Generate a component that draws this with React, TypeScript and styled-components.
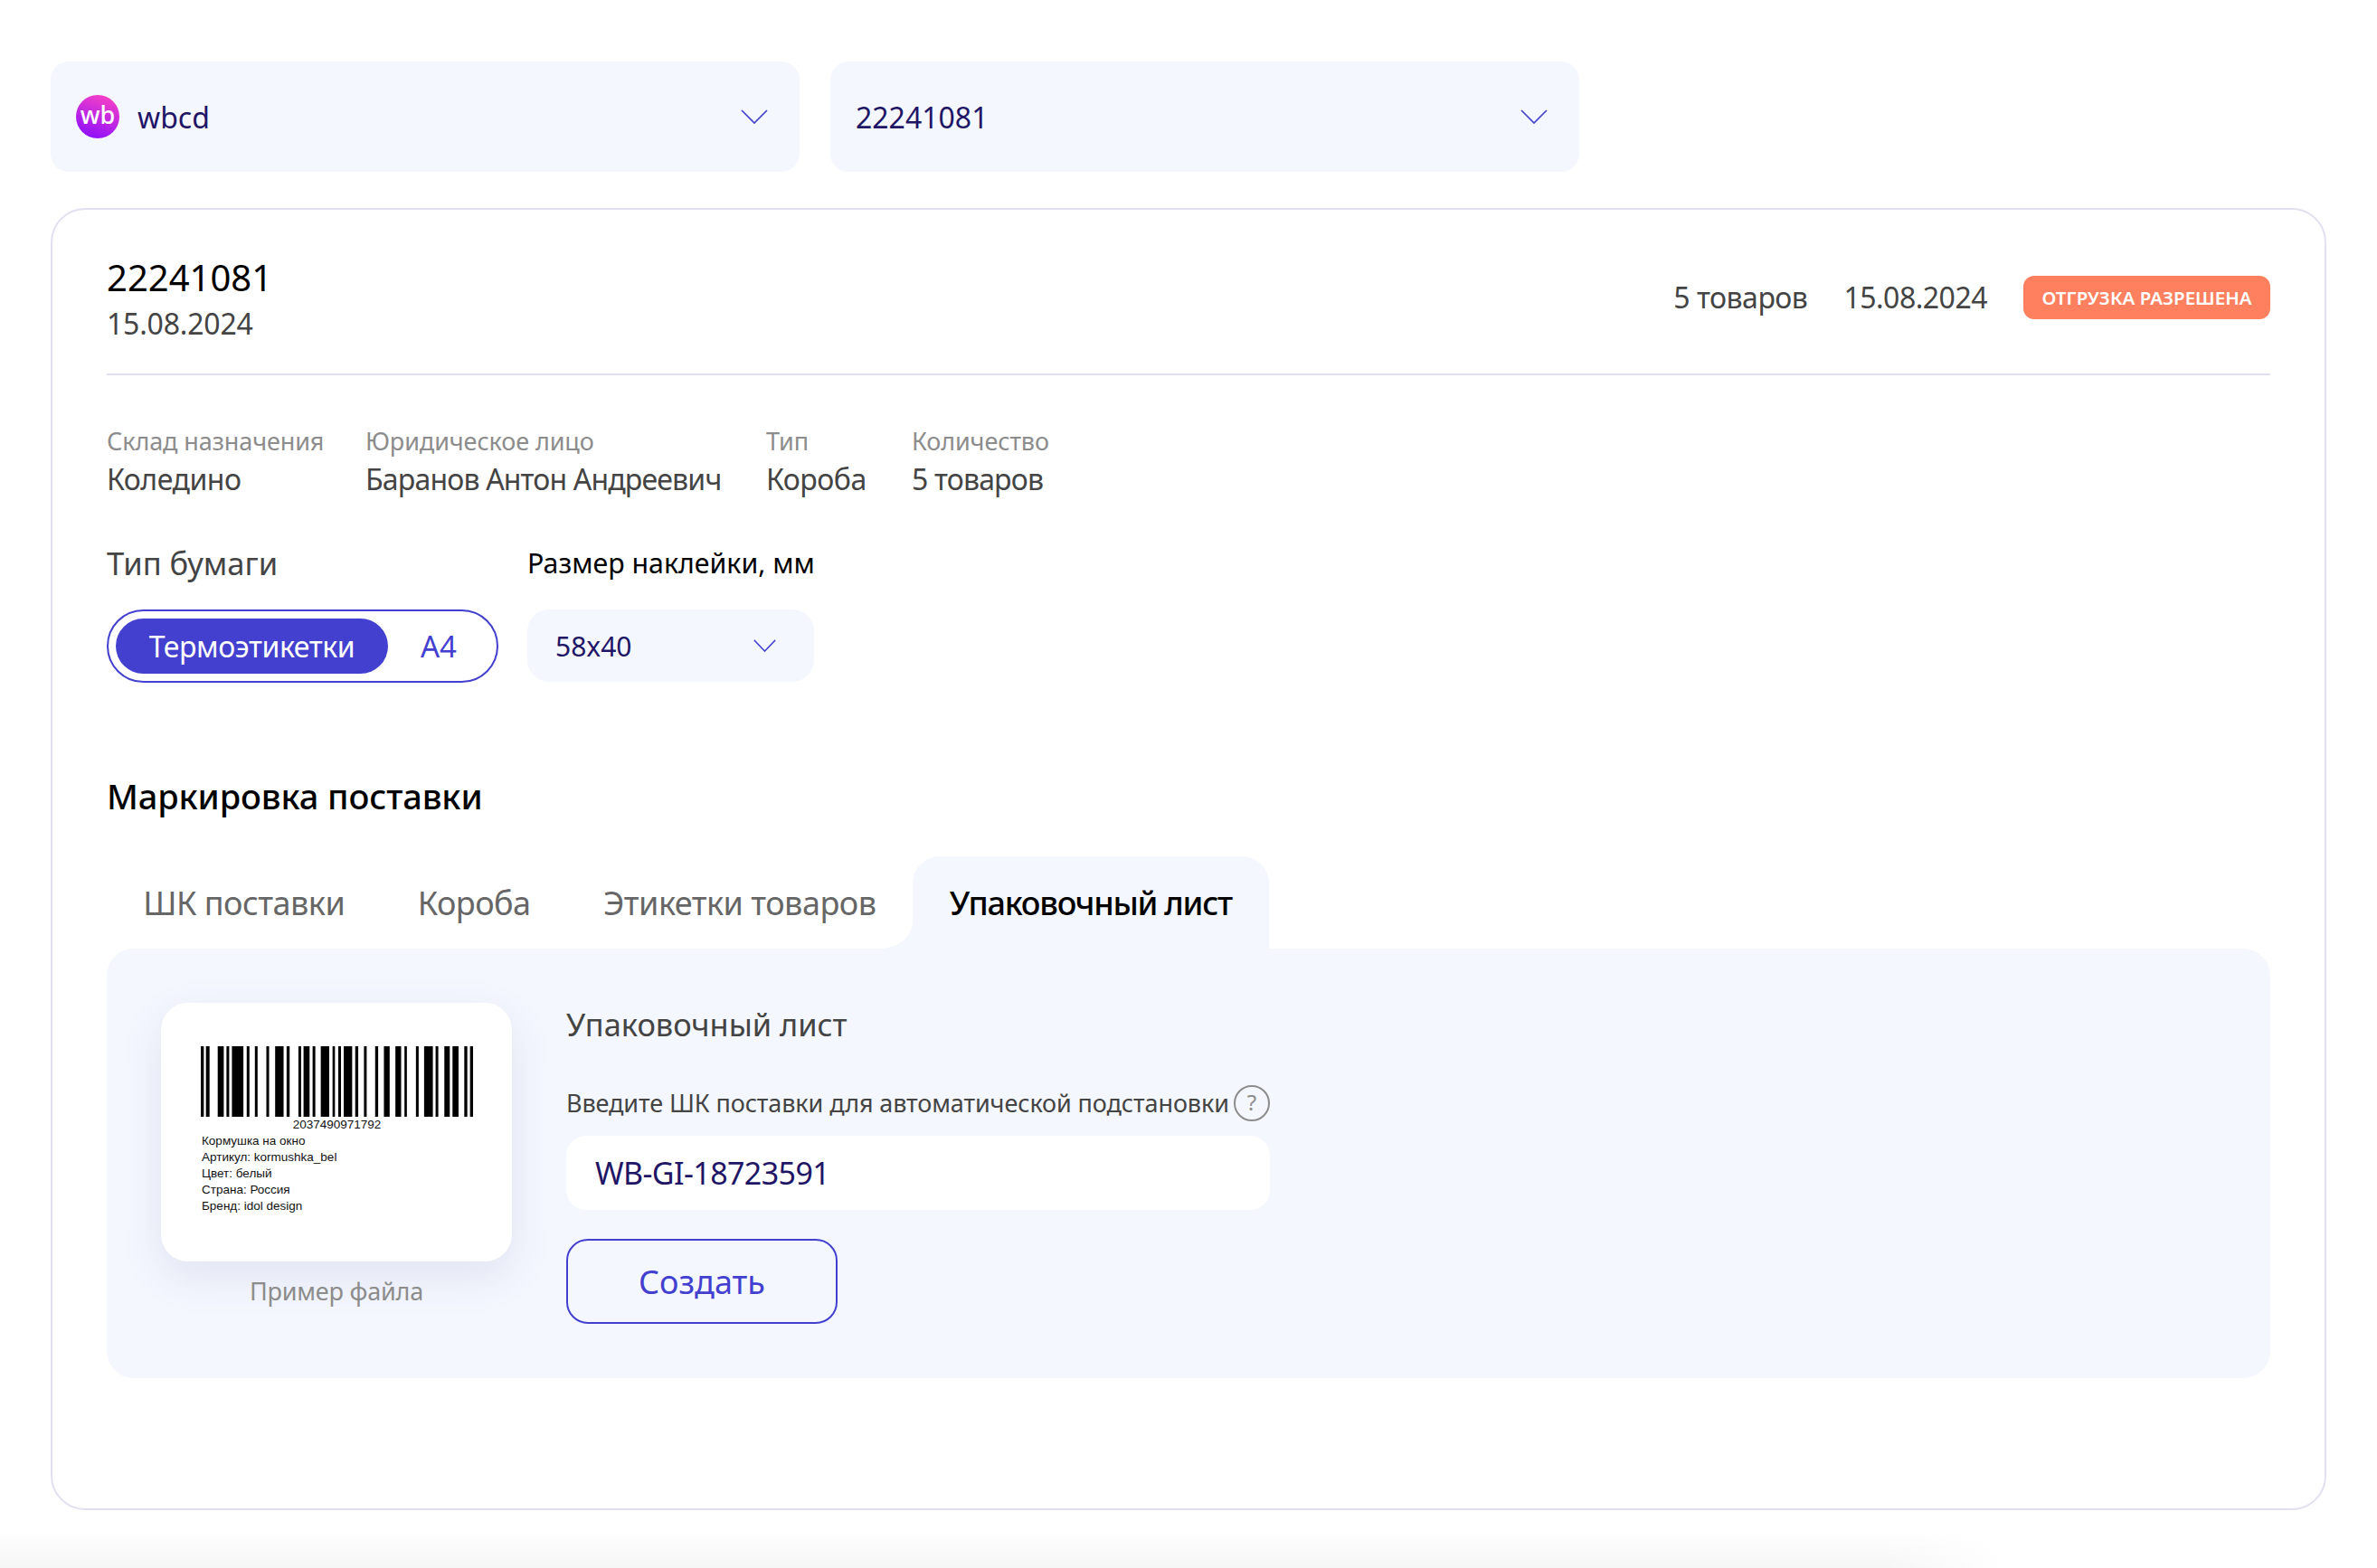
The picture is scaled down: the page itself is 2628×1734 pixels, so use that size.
import React from "react";
import styled, { createGlobalStyle } from "styled-components";

const Global = createGlobalStyle`
  html, body { margin: 0; padding: 0; background: #fff; }
  body { font-family: "Noto Sans", "Open Sans", sans-serif; }
  * { box-sizing: border-box; }
`;

const Page = styled.div`
  width: 2628px;
  height: 1734px;
  padding: 68px 56px 0;
  overflow: hidden;
  position: relative;
`;

const SelectRow = styled.div`
  display: flex;
  gap: 34px;
`;

const SelectBox = styled.div`
  width: 828px;
  height: 122px;
  background: #f4f7fe;
  border-radius: 20px;
  display: flex;
  align-items: center;
  padding: 0 35px 0 28px;
  color: #1f1666;
  font-size: 32px;
  gap: 20px;
`;

const SelectText = styled.span`
  flex: 1;
`;

const Logo = styled.span`
  width: 48px;
  height: 48px;
  border-radius: 50%;
  background: linear-gradient(200deg, #f540c8 10%, #8f10fa 90%);
  color: #fff;
  font-size: 27px;
  font-weight: 500;
  line-height: 44px;
  text-align: center;
`;

const Card = styled.section`
  margin-top: 40px;
  height: 1440px;
  border: 2px solid #e1e0f0;
  border-radius: 38px;
  padding: 48px 60px 0;
`;

const Header = styled.header`
  display: flex;
  justify-content: space-between;
  align-items: center;
  padding-bottom: 31px;
  border-bottom: 2px solid #e1e0f0;
`;

const Title = styled.div`
  font-size: 40px;
  line-height: 54px;
  color: #000;
`;

const SubDate = styled.div`
  font-size: 32px;
  line-height: 48px;
  letter-spacing: -0.2px;
  color: #444;
`;

const HeaderRight = styled.div`
  display: flex;
  align-items: center;
  gap: 40px;
  font-size: 32px;
  letter-spacing: -0.5px;
  color: #444;
  margin-bottom: 5px;
`;

const Badge = styled.span`
  width: 273px;
  height: 48px;
  border-radius: 12px;
  background: #ff805e;
  color: #fff;
  font-size: 20.5px;
  font-weight: 600;
  letter-spacing: 0;
  display: flex;
  align-items: center;
  justify-content: center;
`;

const InfoRow = styled.div`
  display: grid;
  grid-template-columns: 286px 443px 161px auto;
  margin-top: 53px;
`;

const InfoLabel = styled.div`
  font-size: 27px;
  line-height: 40px;
  letter-spacing: -0.1px;
  color: #8c8c8c;
`;

const InfoValue = styled.div<{ $tight?: boolean }>`
  font-size: 32px;
  line-height: 44px;
  letter-spacing: ${(p) => (p.$tight ? "-0.82px" : "-0.5px")};
  color: #444;
`;

const PaperRow = styled.div`
  display: flex;
  gap: 32px;
  margin-top: 47px;
`;

const PaperCol = styled.div`
  display: flex;
  flex-direction: column;
  gap: 27px;
`;

const FieldLabel = styled.div<{ $dark?: boolean }>`
  font-size: ${(p) => (p.$dark ? "30.3px" : "34.6px")};
  line-height: 48px;
  color: ${(p) => (p.$dark ? "#000" : "#444")};
`;

const Toggle = styled.div`
  width: 433px;
  height: 81px;
  border: 2px solid #4340d0;
  border-radius: 41px;
  padding: 8px;
  display: flex;
  align-items: center;
`;

const ToggleOn = styled.span`
  width: 301px;
  height: 61px;
  border-radius: 31px;
  background: #4340d0;
  color: #fff;
  font-size: 32px;
  letter-spacing: -0.4px;
  display: flex;
  align-items: center;
  justify-content: center;
`;

const ToggleOff = styled.span`
  flex: 1;
  text-align: center;
  color: #4340d0;
  font-size: 33px;
`;

const SizeSelect = styled.div`
  width: 317px;
  height: 80px;
  background: #f4f7fe;
  border-radius: 24px;
  display: flex;
  align-items: center;
  justify-content: space-between;
  padding: 0 42px 0 31px;
  color: #1f1666;
  font-size: 30px;
`;

const Heading = styled.h2`
  margin: 98px 0 0;
  font-size: 38px;
  line-height: 54px;
  font-weight: 500;
  letter-spacing: -0.1px;
  color: #000;
`;

const Tabs = styled.div`
  display: flex;
  margin-top: 40px;
  height: 102px;
`;

const Tab = styled.div<{ $active?: boolean }>`
  position: relative;
  padding: 0 ${(p) => (p.$active ? "41px" : "40.2px")};
  display: flex;
  align-items: center;
  font-size: 36px;
  font-weight: ${(p) => (p.$active ? 500 : 400)};
  letter-spacing: ${(p) => (p.$active ? "-1.25px" : "-0.5px")};
  color: ${(p) => (p.$active ? "#000" : "#666")};
  background: ${(p) => (p.$active ? "#f4f7fe" : "transparent")};
  border-radius: ${(p) => (p.$active ? "30px 30px 0 0" : "0")};

  ${(p) =>
    p.$active &&
    `&::before {
      content: "";
      position: absolute;
      left: -36px;
      bottom: 0;
      width: 36px;
      height: 30px;
      background: radial-gradient(ellipse 36px 30px at 0 0, #fff 99%, #f4f7fe 100%);
    }`}
`;

const Panel = styled.div`
  height: 475px;
  background: #f4f7fe;
  border-radius: 30px;
  padding: 60px;
  display: flex;
  gap: 60px;
  align-items: flex-start;
`;

const SampleCol = styled.div`
  width: 388px;
  display: flex;
  flex-direction: column;
  align-items: center;
`;

const SampleCard = styled.div`
  width: 388px;
  height: 286px;
  background: #fff;
  border-radius: 30px;
  box-shadow: 0 16px 48px rgba(60, 60, 130, 0.1);
  padding: 48px 44px 0;
  font-family: "Liberation Sans", Arial, sans-serif;
  color: #111;
`;

const BarcodeSvg = styled.svg`
  display: block;
  width: 301px;
  height: 78px;
`;

const BarcodeNumber = styled.div`
  width: 301px;
  text-align: center;
  font-size: 13.5px;
  line-height: 16px;
  margin-top: 1px;
  margin-bottom: 1px;
`;

const BarcodeLine = styled.div`
  font-size: 13.5px;
  line-height: 18px;
  padding-left: 1px;
`;

const SampleCaption = styled.div`
  margin-top: 13px;
  font-size: 27px;
  line-height: 40px;
  letter-spacing: -0.2px;
  color: #8c8c8c;
`;

const FormCol = styled.div`
  width: 778px;
  display: flex;
  flex-direction: column;
`;

const FormTitle = styled.div`
  font-size: 34.4px;
  line-height: 48px;
  color: #444;
`;

const HintRow = styled.div`
  margin-top: 43px;
  display: flex;
  align-items: center;
  justify-content: space-between;
  font-size: 27px;
  line-height: 40px;
  letter-spacing: -0.1px;
  color: #444;
`;

const Help = styled.span`
  width: 40px;
  height: 40px;
  border-radius: 50%;
  border: 2px solid #8c8c8c;
  color: #8c8c8c;
  font-size: 24px;
  line-height: 34px;
  text-align: center;
`;

const InputBox = styled.div`
  margin-top: 16px;
  height: 82px;
  background: #fff;
  border-radius: 22px;
  display: flex;
  align-items: center;
  padding-left: 32px;
  color: #1f1666;
  font-size: 34px;
  letter-spacing: -0.6px;
`;

const CreateButton = styled.button`
  margin-top: 32px;
  width: 300px;
  height: 94px;
  padding-top: 2px;
  background: transparent;
  border: 2px solid #4340d0;
  border-radius: 24px;
  color: #4340d0;
  font-family: inherit;
  font-size: 36px;
`;

const BottomFade = styled.div`
  position: absolute;
  left: 0;
  bottom: 0;
  width: 2220px;
  height: 44px;
  background: linear-gradient(180deg, rgba(246, 246, 246, 0), rgba(246, 246, 246, 1));
  -webkit-mask-image: linear-gradient(90deg, #000 94%, transparent);
  mask-image: linear-gradient(90deg, #000 94%, transparent);
`;

const Chevron = ({ w, h }: { w: number; h: number }) => (
  <svg width={w} height={h} viewBox="0 0 30 16" fill="none" preserveAspectRatio="none">
    <path d="M1 1 L15 15 L29 1" stroke="#4340d0" strokeWidth="1.7" />
  </svg>
);

const bars: [number, number][] = [
  [67, 77], [84, 96], [123, 143], [152, 161], [170, 208], [219, 228], [246, 255], [284, 293],
  [313, 341], [351, 361], [390, 399], [407, 427], [437, 446], [464, 492], [503, 511], [522, 531],
  [540, 568], [578, 588], [607, 616], [644, 654], [673, 692], [711, 730], [741, 749], [779, 788],
  [806, 835], [844, 853], [873, 891], [900, 920], [939, 949], [958, 968],
];

const Barcode = () => (
  <BarcodeSvg viewBox="67 0 901 78" preserveAspectRatio="none">
    {bars.map(([a, b]) => (
      <rect key={a} x={a} y={0} width={b - a} height={78} fill="#000" />
    ))}
  </BarcodeSvg>
);

const info: { label: string; value: string; tight?: boolean }[] = [
  { label: "Склад назначения", value: "Коледино" },
  { label: "Юридическое лицо", value: "Баранов Антон Андреевич", tight: true },
  { label: "Тип", value: "Короба" },
  { label: "Количество", value: "5 товаров", tight: true },
];

const lines = ["Кормушка на окно", "Артикул: kormushka_bel", "Цвет: белый", "Страна: Россия", "Бренд: idol design"];

export default function App() {
  return (
    <Page>
      <Global />
      <SelectRow>
        <SelectBox>
          <Logo>wb</Logo>
          <SelectText>wbcd</SelectText>
          <Chevron w={30} h={16} />
        </SelectBox>
        <SelectBox>
          <SelectText>22241081</SelectText>
          <Chevron w={30} h={16} />
        </SelectBox>
      </SelectRow>
      <Card>
        <Header>
          <div>
            <Title>22241081</Title>
            <SubDate>15.08.2024</SubDate>
          </div>
          <HeaderRight>
            <span>5 товаров</span>
            <span>15.08.2024</span>
            <Badge>ОТГРУЗКА РАЗРЕШЕНА</Badge>
          </HeaderRight>
        </Header>
        <InfoRow>
          {info.map((i) => (
            <div key={i.label}>
              <InfoLabel>{i.label}</InfoLabel>
              <InfoValue $tight={i.tight}>{i.value}</InfoValue>
            </div>
          ))}
        </InfoRow>
        <PaperRow>
          <PaperCol>
            <FieldLabel>Тип бумаги</FieldLabel>
            <Toggle>
              <ToggleOn>Термоэтикетки</ToggleOn>
              <ToggleOff>А4</ToggleOff>
            </Toggle>
          </PaperCol>
          <PaperCol>
            <FieldLabel $dark>Размер наклейки, мм</FieldLabel>
            <SizeSelect>
              58x40
              <Chevron w={25} h={14} />
            </SizeSelect>
          </PaperCol>
        </PaperRow>
        <Heading>Маркировка поставки</Heading>
        <Tabs>
          <Tab>ШК поставки</Tab>
          <Tab>Короба</Tab>
          <Tab>Этикетки товаров</Tab>
          <Tab $active>Упаковочный лист</Tab>
        </Tabs>
        <Panel>
          <SampleCol>
            <SampleCard>
              <Barcode />
              <BarcodeNumber>2037490971792</BarcodeNumber>
              {lines.map((l) => (
                <BarcodeLine key={l}>{l}</BarcodeLine>
              ))}
            </SampleCard>
            <SampleCaption>Пример файла</SampleCaption>
          </SampleCol>
          <FormCol>
            <FormTitle>Упаковочный лист</FormTitle>
            <HintRow>
              <span>Введите ШК поставки для автоматической подстановки</span>
              <Help>?</Help>
            </HintRow>
            <InputBox>WB-GI-18723591</InputBox>
            <CreateButton>Создать</CreateButton>
          </FormCol>
        </Panel>
      </Card>
      <BottomFade />
    </Page>
  );
}
